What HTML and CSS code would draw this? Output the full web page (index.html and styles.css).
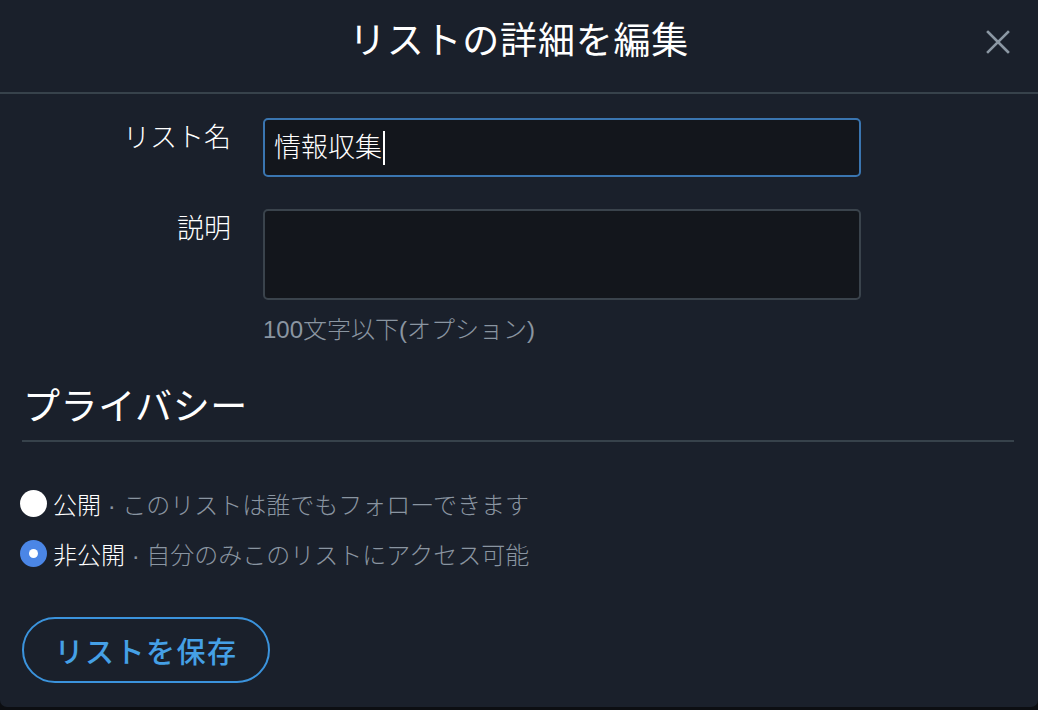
FILE: index.html
```html
<!DOCTYPE html>
<html lang="ja">
<head>
<meta charset="utf-8">
<title>リストの詳細を編集</title>
<link rel="stylesheet" href="styles.css">
</head>
<body>
<div class="modal">
  <header class="modal-header">
    <span class="spacer"></span>
    <h1 class="title">リストの詳細を編集</h1>
    <button class="close" aria-label="閉じる">
      <svg viewBox="0 0 24 24" width="24" height="24"><path d="M2 2 L22 22 M22 2 L2 22" stroke="#8b97a3" stroke-width="2.6" stroke-linecap="square" fill="none"/></svg>
    </button>
  </header>

  <section class="form">
    <div class="row">
      <label class="label">リスト名</label>
      <div class="field input focused"><span class="value">情報収集</span><span class="caret"></span></div>
    </div>
    <div class="row row-desc">
      <label class="label">説明</label>
      <div class="field-col">
        <div class="field textarea"></div>
        <div class="hint">100文字以下(オプション)</div>
      </div>
    </div>
  </section>

  <section class="privacy">
    <h2 class="section-title">プライバシー</h2>
    <div class="options">
      <div class="option">
        <span class="radio"></span>
        <span class="opt-name">公開</span><span class="opt-desc"> · このリストは誰でもフォローできます</span>
      </div>
      <div class="option">
        <span class="radio checked"></span>
        <span class="opt-name">非公開</span><span class="opt-desc"> · 自分のみこのリストにアクセス可能</span>
      </div>
    </div>
    <button class="save">リストを保存</button>
  </section>
</div>
</body>
</html>
```

FILE: styles.css
```css
html, body {
  margin: 0;
  padding: 0;
}
body {
  background: #0c0e12;
  font-family: "Liberation Sans", "Noto Sans CJK JP", sans-serif;
  font-weight: 300;
  color: #ffffff;
  width: 1038px;
  height: 710px;
  overflow: hidden;
}
.modal {
  width: 1038px;
  height: 707px;
  background: #1a202b;
  border-radius: 0 0 7px 7px;
  box-sizing: border-box;
}
.modal-header {
  display: grid;
  grid-template-columns: 1fr auto 1fr;
  align-items: center;
  height: 94px;
  box-sizing: border-box;
  padding: 20px 0 28px;
  border-bottom: 2px solid #37424b;
}
.title {
  margin: 0;
  font-size: 37px;
  line-height: 44px;
  font-weight: 400;
  letter-spacing: 0.8px;
  color: #ffffff;
}
.close {
  justify-self: end;
  margin-right: 28px;
  width: 24px;
  height: 24px;
  padding: 0;
  border: 0;
  background: none;
  display: flex;
}
.form {
  padding: 24px 0 0;
}
.row {
  display: grid;
  grid-template-columns: 231px 598px;
  column-gap: 32px;
  align-items: start;
}
.row-desc {
  margin-top: 32px;
}
.label {
  text-align: right;
  font-size: 27px;
  line-height: 40px;
  color: #ffffff;
}
.field {
  box-sizing: border-box;
  background: #13161c;
  border-radius: 5px;
}
.input {
  height: 59px;
  border: 2px solid #3a75b0;
  display: flex;
  align-items: center;
  padding-left: 9px;
}
.value {
  font-size: 27px;
  line-height: 34px;
  color: #ffffff;
}
.caret {
  width: 2px;
  height: 34px;
  background: #ffffff;
  margin-left: 1px;
}
.textarea {
  height: 91px;
  border: 2px solid #3a434c;
}
.hint {
  margin-top: 15px;
  font-size: 24px;
  line-height: 30px;
  color: #8a95a1;
}
.privacy {
  padding: 41px 24px 0 22px;
}
.section-title {
  margin: 0;
  font-size: 37px;
  line-height: 44px;
  font-weight: 400;
  letter-spacing: 0.6px;
  padding: 0 0 10px 1px;
  border-bottom: 2px solid #37424b;
  color: #ffffff;
}
.options {
  margin-top: 43px;
  display: flex;
  flex-direction: column;
  gap: 14px;
}
.option {
  display: flex;
  align-items: center;
  height: 36px;
  font-size: 24px;
  margin-left: -2px;
}
.radio {
  width: 27px;
  height: 27px;
  border-radius: 50%;
  background: #ffffff;
  box-sizing: border-box;
  margin-right: 6px;
  flex: none;
}
.radio.checked {
  background: #4b86e6;
  display: flex;
  align-items: center;
  justify-content: center;
}
.radio.checked::after {
  content: "";
  width: 9px;
  height: 9px;
  border-radius: 50%;
  background: #ffffff;
}
.opt-name {
  color: #ffffff;
}
.opt-desc {
  color: #8a95a1;
  white-space: pre;
}
.save {
  margin-top: 46px;
  width: 248px;
  height: 66px;
  border: 2px solid #3b93dc;
  border-radius: 33px;
  background: transparent;
  color: #45a0e6;
  font-family: "Liberation Sans", "Noto Sans CJK JP", sans-serif;
  font-size: 29px;
  font-weight: 500;
  letter-spacing: 1.5px;
  padding: 0;
}
```
